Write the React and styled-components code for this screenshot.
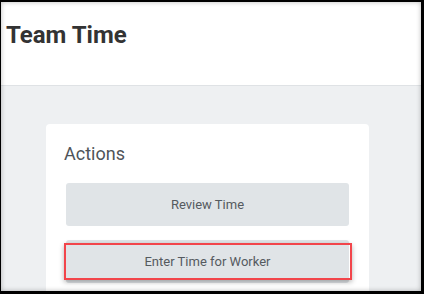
import React from "react";
import styled, { createGlobalStyle } from "styled-components";

const GlobalStyle = createGlobalStyle`
  html, body {
    margin: 0;
    padding: 0;
    background: #000;
  }
  body {
    font-family: Roboto, "Liberation Sans", Arial, sans-serif;
  }
`;

const Frame = styled.div`
  position: relative;
  box-sizing: border-box;
  width: 424px;
  height: 294px;
  border-style: solid;
  border-color: #000;
  border-width: 2px 3px 3px 1px;
  background: #eef0f2;
  overflow: hidden;
  display: flex;
  flex-direction: column;

  &::after {
    content: "";
    position: absolute;
    inset: 0;
    box-shadow: inset 0 0 5px rgba(0, 0, 0, 0.28);
    pointer-events: none;
  }
`;

const Header = styled.header`
  box-sizing: border-box;
  height: 84px;
  flex-shrink: 0;
  background: #fff;
  border-bottom: 1px solid #dfe2e5;
  padding: 19px 0 0 5px;
`;

const PageTitle = styled.h1`
  margin: 0;
  font-size: 24px;
  font-weight: 700;
  color: #333;
  line-height: 28px;
`;

const Content = styled.main`
  flex: 1;
  padding: 38px 0 0 45px;
`;

const Card = styled.section`
  box-sizing: border-box;
  width: 323px;
  height: 200px;
  background: #fff;
  border-radius: 4px;
  padding: 19px 20px 0 20px;
`;

const CardTitle = styled.h2`
  margin: 0 0 18px -2px;
  font-size: 18px;
  font-weight: 400;
  color: #4f5459;
  line-height: 22px;
`;

const ActionList = styled.div`
  display: flex;
  flex-direction: column;
  gap: 14px;
`;

const ActionWrap = styled.div`
  position: relative;
`;

const ActionButton = styled.button`
  display: flex;
  align-items: center;
  justify-content: center;
  width: 100%;
  height: 43px;
  border: none;
  border-radius: 3px;
  background: #e0e4e7;
  color: #555a5f;
  font-family: Roboto, "Liberation Sans", Arial, sans-serif;
  font-size: 13px;
  font-weight: 400;
  cursor: pointer;
`;

const Highlight = styled.div`
  position: absolute;
  top: 3px;
  left: -2px;
  right: -3px;
  height: 37px;
  box-sizing: border-box;
  border: 2px solid #f2454b;
  box-shadow: 0 2px 5px rgba(0, 0, 0, 0.3);
  pointer-events: none;
`;

const App = () => {
  return (
    <>
      <GlobalStyle />
      <Frame>
        <Header>
          <PageTitle>Team Time</PageTitle>
        </Header>
        <Content>
          <Card>
            <CardTitle>Actions</CardTitle>
            <ActionList>
              <ActionButton>Review Time</ActionButton>
              <ActionWrap>
                <ActionButton>Enter Time for Worker</ActionButton>
                <Highlight />
              </ActionWrap>
            </ActionList>
          </Card>
        </Content>
      </Frame>
    </>
  );
};

export default App;
